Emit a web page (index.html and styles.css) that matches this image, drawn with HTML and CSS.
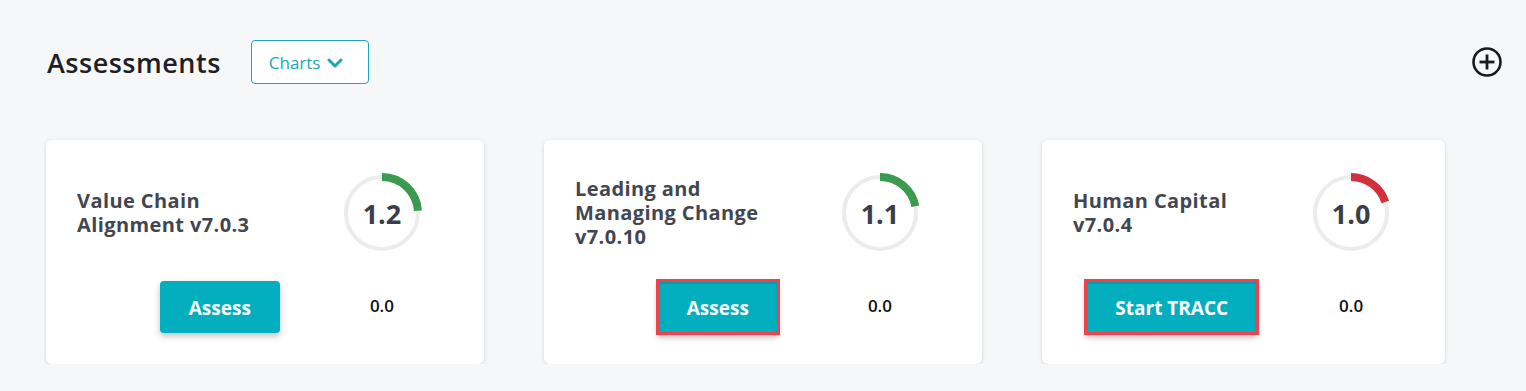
FILE: index.html
```html
<!DOCTYPE html>
<html lang="en">
<head>
  <meta charset="UTF-8">
  <meta name="viewport" content="width=device-width, initial-scale=1.0">
  <title>Assessments</title>
  <link rel="stylesheet" href="styles.css">
</head>
<body>
<div class="page">
  <div class="page-header">
    <h1>Assessments</h1>
    <button class="charts-button">
      Charts
      <svg class="chevron" width="16" height="10" viewBox="0 0 16 10">
        <polyline points="2,2 8,8 14,2" fill="none" stroke="currentColor" stroke-width="3" stroke-linecap="round" stroke-linejoin="round"/>
      </svg>
    </button>
    <button class="add-button" title="Add">
      <svg width="32" height="32" viewBox="0 0 32 32">
        <circle cx="16" cy="16" r="13.5" fill="none" stroke="#1b1b1f" stroke-width="2.6"/>
        <line x1="16" y1="8.5" x2="16" y2="23.5" stroke="#1b1b1f" stroke-width="2.8"/>
        <line x1="8.5" y1="16" x2="23.5" y2="16" stroke="#1b1b1f" stroke-width="2.8"/>
      </svg>
    </button>
  </div>

  <div class="cards">
    <!-- Value Chain -->
    <div class="card card-wide">
      <div class="card-title">Value Chain Alignment v7.0.3</div>
      <div class="gauge">
        <svg width="80" height="80" viewBox="0 0 80 80">
          <circle class="gauge-track" cx="40" cy="40" r="36"/>
          <circle class="gauge-bar good" cx="40" cy="40" r="36" pathLength="100" stroke-dasharray="24 100"/>
        </svg>
        <span class="gauge-value">1.2</span>
      </div>
      <button class="action-button">Assess</button>
      <div class="score">0.0</div>
    </div>

    <!-- Leading and Managing Change -->
    <div class="card card-wide">
      <div class="card-title">Leading and Managing Change v7.0.10</div>
      <div class="gauge">
        <svg width="80" height="80" viewBox="0 0 80 80">
          <circle class="gauge-track" cx="40" cy="40" r="36"/>
          <circle class="gauge-bar good" cx="40" cy="40" r="36" pathLength="100" stroke-dasharray="22 100"/>
        </svg>
        <span class="gauge-value">1.1</span>
      </div>
      <button class="action-button highlighted">Assess</button>
      <div class="score">0.0</div>
    </div>

    <!-- Human Capital -->
    <div class="card card-narrow">
      <div class="card-title">Human Capital v7.0.4</div>
      <div class="gauge">
        <svg width="80" height="80" viewBox="0 0 80 80">
          <circle class="gauge-track" cx="40" cy="40" r="36"/>
          <circle class="gauge-bar bad" cx="40" cy="40" r="36" pathLength="100" stroke-dasharray="20 100"/>
        </svg>
        <span class="gauge-value">1.0</span>
      </div>
      <button class="action-button highlighted">Start TRACC</button>
      <div class="score">0.0</div>
    </div>
  </div>
</div>
</body>
</html>
```

FILE: styles.css
```css
body {
  font-family: "Open Sans", sans-serif;
  margin: 0;
  padding: 0;
  background-color: #f6f7f9;
  color: #333;
}

.page {
  padding: 40px 23px 0 46px;
}

.page-header {
  display: flex;
  align-items: center;
  height: 44px;
}

.page-header h1 {
  margin: 0 30px 0 1px;
  font-size: 27px;
  font-weight: 600;
  color: #1e1f24;
  letter-spacing: 0.5px;
}

.charts-button {
  display: flex;
  align-items: center;
  gap: 7px;
  height: 44px;
  width: 118px;
  padding: 0 0 0 17px;
  background-color: #fff;
  border: 1px solid #1ca6b6;
  border-radius: 4px;
  color: #1ca6b6;
  font-family: "Open Sans", sans-serif;
  font-size: 17px;
}

.chevron {
  margin-top: 1px;
}

.add-button {
  margin-left: auto;
  padding: 0;
  background: none;
  border: none;
  display: flex;
}

.cards {
  display: flex;
  gap: 60px;
  margin-top: 56px;
}

.card {
  display: grid;
  grid-template-columns: 53.4% 46.6%;
  grid-template-rows: 80px 52px;
  row-gap: 28px;
  align-items: center;
  padding: 33px 0 31px;
  background-color: #fff;
  border-radius: 6px;
  box-shadow: 0 1px 4px rgba(0, 0, 0, 0.14);
}

.card-wide {
  width: 438px;
}

.card-narrow {
  width: 403px;
}

.card-title {
  padding-left: 31px;
  font-size: 20px;
  font-weight: 700;
  line-height: 24px;
  letter-spacing: 0.4px;
  color: #434651;
}

.gauge {
  position: relative;
  justify-self: center;
  width: 80px;
  height: 80px;
}

.gauge svg {
  display: block;
  transform: rotate(-90deg);
}

.gauge-track {
  fill: none;
  stroke: #ececec;
  stroke-width: 4;
}

.gauge-bar {
  fill: none;
  stroke-width: 8;
}

.gauge-bar.good {
  stroke: #3a9b50;
}

.gauge-bar.bad {
  stroke: #d1313a;
}

.gauge-value {
  position: absolute;
  inset: 0;
  display: flex;
  align-items: center;
  justify-content: center;
  font-size: 27px;
  font-weight: 700;
  color: #3b3d47;
}

.action-button {
  justify-self: end;
  height: 52px;
  padding: 2px 29px 0;
  background-color: #03afbf;
  border: none;
  border-radius: 4px;
  color: white;
  font-family: "Open Sans", sans-serif;
  font-size: 19px;
  font-weight: 700;
  box-shadow: 0 3px 6px rgba(0, 0, 0, 0.25);
}

.action-button.highlighted {
  border-radius: 0;
  outline: 3px solid #ea444c;
  outline-offset: -1px;
  box-shadow: inset 0 2px 3px rgba(0, 80, 90, 0.35), 0 4px 6px rgba(0, 0, 0, 0.3);
}

.score {
  justify-self: center;
  margin-top: -3px;
  font-size: 17px;
  font-weight: 600;
  color: #111;
}
```
